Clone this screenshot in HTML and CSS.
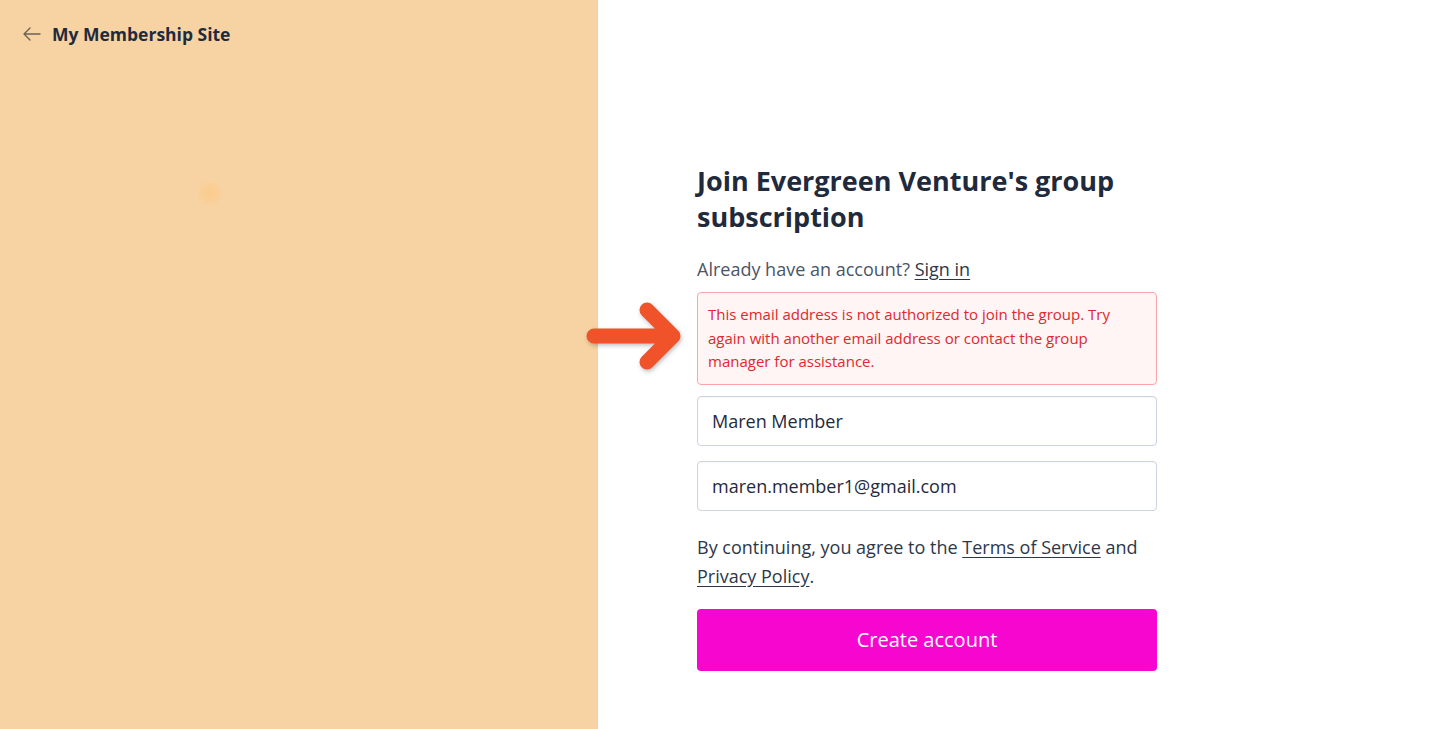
FILE: index.html
```html
<!DOCTYPE html>
<html lang="en">
<head>
  <meta charset="UTF-8" />
  <meta name="viewport" content="width=device-width, initial-scale=1.0"/>
  <title>Join group subscription</title>
  <link rel="stylesheet" href="styles.css">
</head>
<body>

  <aside class="side">
    <a class="back-link" href="#">
      <svg class="back-icon" width="18" height="14" viewBox="0 0 18 14" fill="none">
        <path d="M17 7H1.5M7 1L1 7l6 6" stroke="#6b6258" stroke-width="1.4" stroke-linecap="round" stroke-linejoin="round"/>
      </svg>
      My Membership Site
    </a>
    <span class="glow"></span>
  </aside>

  <main class="main">
    <form class="signup" onsubmit="return false">
      <h1>Join Evergreen Venture's group subscription</h1>

      <p class="have-account">Already have an account? <a href="#">Sign in</a></p>

      <div class="error-wrap">
        <svg class="pointer" width="104" height="76" viewBox="0 0 104 76" fill="none">
          <path d="M9 38H88M62 12L88 38L62 64" stroke="#f0522a" stroke-width="15" stroke-linecap="round" stroke-linejoin="round"/>
        </svg>
        <div class="error">
          This email address is not authorized to join the group. Try again with another email address or contact the group manager for assistance.
        </div>
      </div>

      <input class="field" type="text" value="Maren Member">
      <input class="field" type="email" value="maren.member1@gmail.com">

      <p class="terms">By continuing, you agree to the <a href="#">Terms of Service</a> and <a href="#">Privacy Policy</a>.</p>

      <button class="submit" type="submit">Create account</button>
    </form>
  </main>

</body>
</html>
```

FILE: styles.css
```css
body {
  margin: 0;
  height: 729px;
  display: flex;
  font-family: "Open Sans", Lato, sans-serif;
  color: #1f2a3c;
  background: #fff;
  overflow: hidden;
}

.side {
  width: 598px;
  flex-shrink: 0;
  background: #f7d3a3;
  position: relative;
}

.back-link {
  display: flex;
  align-items: center;
  gap: 11px;
  padding: 22px 0 0 23px;
  font-size: 17.5px;
  font-weight: 700;
  color: #1f2a3c;
  text-decoration: none;
}

.glow {
  position: absolute;
  left: 198px;
  top: 181px;
  width: 24px;
  height: 24px;
  border-radius: 50%;
  background: radial-gradient(circle, rgba(255, 200, 130, 0.7), rgba(255, 200, 130, 0));
}

.main {
  flex: 1;
  padding: 163px 0 0 99px;
}

.signup {
  width: 460px;
  display: flex;
  flex-direction: column;
}

h1 {
  margin: 0;
  font-size: 27px;
  line-height: 36px;
  font-weight: 700;
  color: #1f2a3c;
}

.have-account {
  margin: 22px 0 10px;
  font-size: 18px;
  line-height: 25px;
  color: #4a5568;
}

.have-account a,
.terms a {
  color: #2d3748;
  text-decoration: underline;
  text-underline-offset: 3px;
}

.error-wrap {
  position: relative;
}

.pointer {
  position: absolute;
  left: -112px;
  top: 6px;
  filter: drop-shadow(1px 2px 2px rgba(0, 0, 0, 0.25));
}

.error {
  padding: 10px 10px 10px;
  background: #fff5f5;
  border: 1px solid #fca5a8;
  border-radius: 4px;
  color: #e0282e;
  font-size: 15px;
  line-height: 23.5px;
}

.field {
  margin-top: 11px;
  height: 50px;
  box-sizing: border-box;
  padding: 0 14px;
  border: 1px solid #cbd5e0;
  border-radius: 4px;
  font-family: inherit;
  font-size: 18px;
  color: #1f2a3c;
  box-shadow: inset 0 1px 2px rgba(0, 0, 0, 0.04);
}

.field + .field {
  margin-top: 15px;
}

.terms {
  margin: 22px 0 18px;
  font-size: 18px;
  line-height: 29px;
  color: #2d3748;
}

.submit {
  height: 62px;
  border: none;
  border-radius: 4px;
  background: #f706cf;
  color: #fff;
  font-family: inherit;
  font-size: 20px;
  cursor: pointer;
}
```
